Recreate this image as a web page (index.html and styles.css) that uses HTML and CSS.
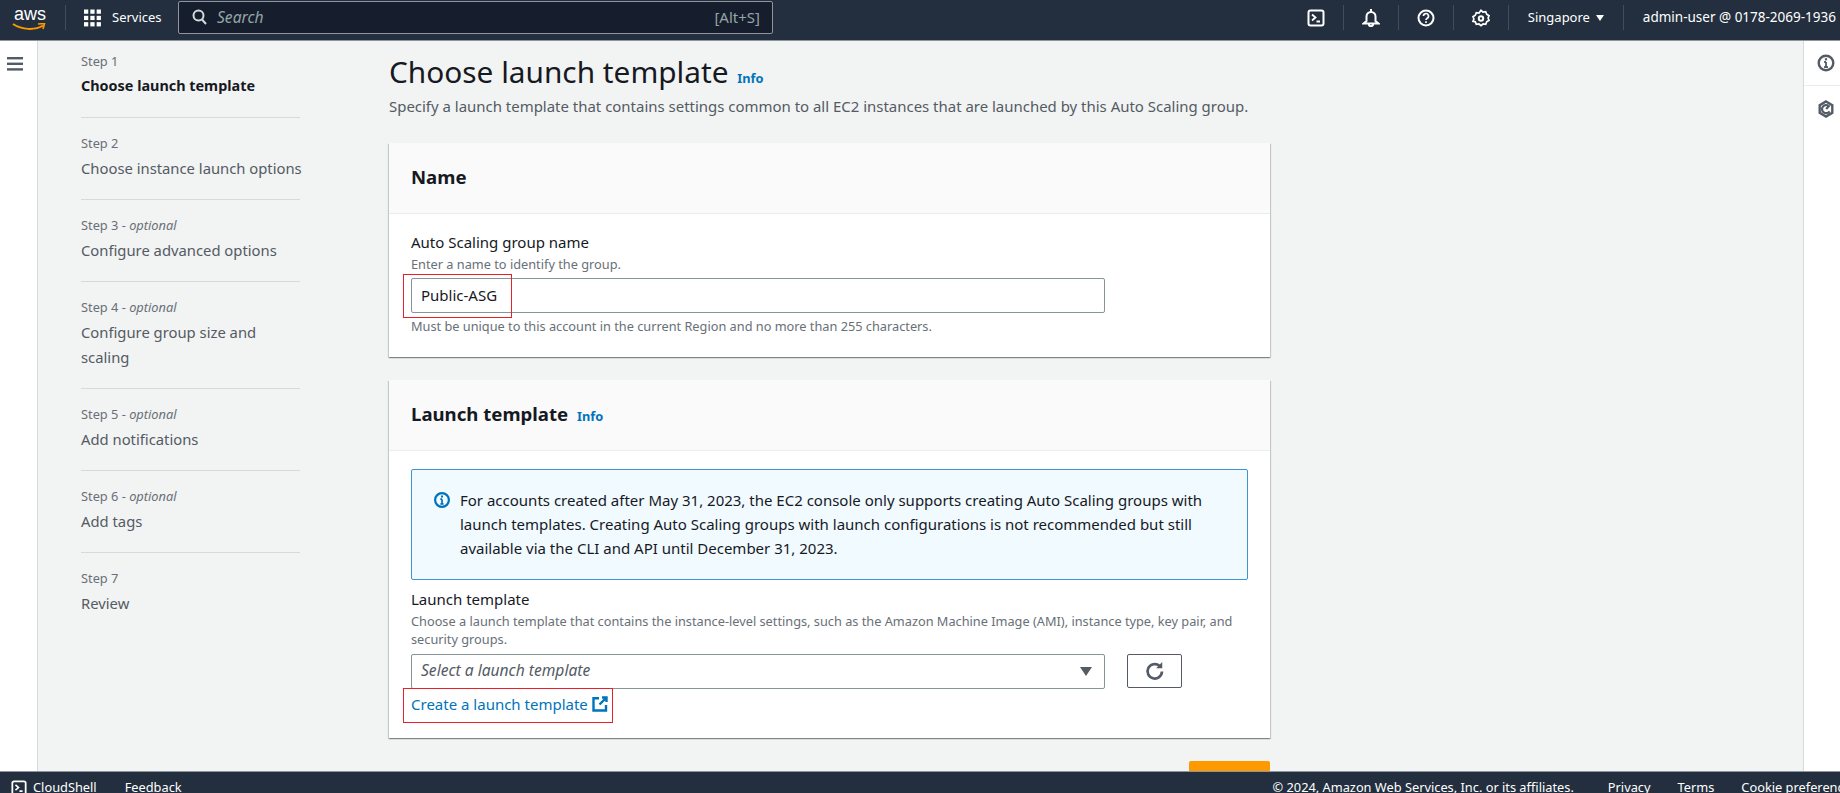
FILE: index.html

```html
<!DOCTYPE html>
<html lang="en">
<head>
  <meta charset="UTF-8" />
  <title>Create Auto Scaling group</title>
  <link rel="stylesheet" href="styles.css">
</head>
<body>
  <header class="topbar">
    <div class="logo">
      <span class="logo-text">aws</span>
      <svg class="logo-smile" width="35" height="8" viewBox="0 0 35 8"><path d="M1 1c9 6 22 6.500 30 1.500" fill="none" stroke="#f90" stroke-width="2"/><path d="M26 1l6.500-.5-1.500 5.500" fill="none" stroke="#f90" stroke-width="1.600"/></svg>
    </div>
    <div class="top-sep"></div>
    <svg class="grid-icon" width="17" height="18" viewBox="0 0 18 18" fill="#fff">
      <rect x="0" y="0" width="4.500" height="4.500"/><rect x="6.700" y="0" width="4.500" height="4.500"/><rect x="13.400" y="0" width="4.500" height="4.500"/>
      <rect x="0" y="6.700" width="4.500" height="4.500"/><rect x="6.700" y="6.700" width="4.500" height="4.500"/><rect x="13.400" y="6.700" width="4.500" height="4.500"/>
      <rect x="0" y="13.400" width="4.500" height="4.500"/><rect x="6.700" y="13.400" width="4.500" height="4.500"/><rect x="13.400" y="13.400" width="4.500" height="4.500"/>
    </svg>
    <span class="services">Services</span>
    <div class="search">
      <svg width="17" height="16" viewBox="0 0 16 16" fill="none" stroke="#d5dbdb" stroke-width="2"><circle cx="7" cy="6.500" r="5"/><path d="M10.500 10.500l4 4.500"/></svg>
      <span class="search-text">Search</span>
      <span class="search-key">[Alt+S]</span>
    </div>
    <div class="top-right">
      <div class="top-icon">
        <svg width="18" height="18" viewBox="0 0 18 18" fill="none" stroke="#fff" stroke-width="2"><rect x="1.500" y="1.500" width="15" height="15" rx="2"/><path d="M5 5.500l3.500 3-3.500 3M9.500 12.500h3.500" stroke-width="1.800"/></svg>
      </div>
      <div class="top-icon">
        <svg width="18" height="18" viewBox="0 0 18 18" fill="none" stroke="#fff" stroke-width="2"><path d="M9 0v2.500M4.500 12V7.500a4.500 4.500 0 0 1 9 0V12l3 2.500h-15zM6.800 15a2.200 2.200 0 0 0 4.400 0"/></svg>
      </div>
      <div class="top-icon">
        <svg width="18" height="18" viewBox="0 0 18 18" fill="none" stroke="#fff" stroke-width="2"><circle cx="9" cy="9" r="7.500"/><path d="M6.500 7a2.500 2.500 0 1 1 3.700 2.200c-.8.500-1.200 1-1.200 1.800" stroke-width="1.700"/><path d="M9 12.300v1.700" stroke-width="1.700"/></svg>
      </div>
      <div class="top-icon">
        <svg width="18" height="18" viewBox="0 0 18 18" fill="none" stroke="#fff" stroke-width="2"><path d="M9 1.300l2 1.700 2.700-.3 1 2.500 2.300 1.500-.9 2.300.9 2.300-2.300 1.500-1 2.500-2.700-.3-2 1.700-2-1.700-2.700.3-1-2.500L1 12.300l.9-2.300L1 7.700l2.300-1.500 1-2.500L7 4z" stroke-width="1.700"/><circle cx="9" cy="9.500" r="2.200"/></svg>
      </div>
      <div class="top-item top-region">Singapore <span class="caret"></span></div>
      <div class="top-item top-user">admin-user @ 0178-2069-1936</div>
    </div>
  </header>

  <div class="middle">
    <div class="left-rail">
      <svg width="16" height="14" viewBox="0 0 16 14" fill="#545b64"><rect width="16" height="2.400"/><rect y="5.600" width="16" height="2.400"/><rect y="11.200" width="16" height="2.400"/></svg>
    </div>

    <nav class="steps">
      <div class="step"><div class="step-num">Step 1</div><div class="step-name step-active">Choose launch template</div></div>
      <div class="step"><div class="step-num">Step 2</div><div class="step-name">Choose instance launch options</div></div>
      <div class="step"><div class="step-num">Step 3 - <i>optional</i></div><div class="step-name">Configure advanced options</div></div>
      <div class="step"><div class="step-num">Step 4 - <i>optional</i></div><div class="step-name">Configure group size and<br>scaling</div></div>
      <div class="step"><div class="step-num">Step 5 - <i>optional</i></div><div class="step-name">Add notifications</div></div>
      <div class="step"><div class="step-num">Step 6 - <i>optional</i></div><div class="step-name">Add tags</div></div>
      <div class="step step-last"><div class="step-num">Step 7</div><div class="step-name">Review</div></div>
    </nav>

    <main class="content">
      <h1>Choose launch template <a class="info" href="#">Info</a></h1>
      <p class="page-desc">Specify a launch template that contains settings common to all EC2 instances that are launched by this Auto Scaling group.</p>

      <section class="card">
        <div class="card-head"><h2>Name</h2></div>
        <div class="card-body">
          <div class="label">Auto Scaling group name</div>
          <div class="hint">Enter a name to identify the group.</div>
          <div class="field-wrap">
            <div class="field">Public-ASG</div>
            <div class="mark mark-name"></div>
          </div>
          <div class="hint hint-after">Must be unique to this account in the current Region and no more than 255 characters.</div>
        </div>
      </section>

      <section class="card">
        <div class="card-head"><h2>Launch template <a class="info" href="#">Info</a></h2></div>
        <div class="card-body">
          <div class="alert">
            <svg class="alert-icon" width="16" height="16" viewBox="0 0 16 16" fill="none" stroke="#0073bb" stroke-width="2.200"><circle cx="8" cy="8" r="6.900"/><path d="M8 7.200v4.600M6.300 12h3.400M6.300 7.200H8" stroke-width="1.700"/><path d="M8 3.600v2" stroke-width="2"/></svg>
            <p>For accounts created after May 31, 2023, the EC2 console only supports creating Auto Scaling groups with launch templates. Creating Auto Scaling groups with launch configurations is not recommended but still available via the CLI and API until December 31, 2023.</p>
          </div>
          <div class="label">Launch template</div>
          <div class="hint hint-wide">Choose a launch template that contains the instance-level settings, such as the Amazon Machine Image (AMI), instance type, key pair, and security groups.</div>
          <div class="select-row">
            <div class="field select"><i>Select a launch template</i><span class="select-caret"></span></div>
            <div class="refresh">
              <svg width="20" height="20" viewBox="0 0 18 18" fill="none" stroke="#545b64" stroke-width="2.400"><path d="M15.300 9.500a6.500 6.500 0 1 1-2.300-5.200"/><path d="M15.500 1v5.500H10z" fill="#545b64" stroke="none"/></svg>
            </div>
          </div>
          <div class="link-wrap">
            <a class="create-link" href="#">Create a launch template
              <svg width="16" height="16" viewBox="0 0 16 16" fill="none" stroke="#0073bb" stroke-width="2.400"><path d="M7 2.200H1.500v12.300H14V9M10 1.500h4.500V6M14 2L7.500 8.500"/></svg>
            </a>
            <div class="mark mark-link"></div>
          </div>
        </div>
      </section>

      <div class="actions"><div class="next-btn"></div></div>
    </main>

    <aside class="right-rail">
      <div class="rail-btn">
        <svg width="18" height="18" viewBox="0 0 18 18" fill="none" stroke="#545b64" stroke-width="2.400"><circle cx="9" cy="9" r="7.300"/><path d="M9 8v5M7.100 13h3.800M7.100 8H9" stroke-width="1.800"/><path d="M9 4.200v2.200" stroke-width="2.200"/></svg>
      </div>
      <div class="rail-btn">
        <svg width="18" height="18" viewBox="0 0 18 18" fill="none" stroke="#545b64" stroke-width="2.400"><path d="M9 1.500l6.300 3.700v7.600L9 16.500l-6.300-3.700V5.200z"/><path d="M12.600 11.300A4.100 4.100 0 1 1 11.800 6l-2.600 3" stroke-width="2.200"/></svg>
      </div>
    </aside>
  </div>

  <footer class="footer">
    <div class="foot-left">
      <svg width="16" height="16" viewBox="0 0 18 18" fill="none" stroke="#fff" stroke-width="2"><rect x="1.500" y="1.500" width="15" height="15" rx="2"/><path d="M5 5.500l3.500 3-3.500 3M9.500 12.500h3.500" stroke-width="1.800"/></svg>
      <span>CloudShell</span>
      <span class="foot-feedback">Feedback</span>
    </div>
    <div class="foot-right">
      <span class="foot-copy">© 2024, Amazon Web Services, Inc. or its affiliates.</span>
      <span>Privacy</span>
      <span>Terms</span>
      <span>Cookie preferences</span>
    </div>
  </footer>
</body>
</html>
```

FILE: styles.css

```css
* {
  box-sizing: border-box;
}
html, body {
  margin: 0;
  height: 793px;
  overflow: hidden;
}
body {
  display: flex;
  flex-direction: column;
  font-family: "Noto Sans", Arial, sans-serif;
  font-size: 15px;
  color: #16191f;
  background: #f2f3f3;
}
a {
  color: #0073bb;
  text-decoration: none;
}

/* top bar */
.topbar {
  flex: 0 0 41px;
  display: flex;
  align-items: center;
  background: #232f3e;
  color: #fff;
  padding: 0 4px 5px 12px;
  border-bottom: 1px solid #8d959e;
}
.logo {
  flex: none;
  width: 36px;
  height: 28px;
  position: relative;
}
.logo-text {
  font-family: "Liberation Sans", Arial, sans-serif;
  font-size: 18px;
  line-height: 20px;
  display: block;
  margin-left: 2px;
}
.logo-smile {
  position: absolute;
  left: 0;
  top: 19px;
}
.top-sep {
  width: 1px;
  height: 25px;
  background: #414d5c;
  margin: 0 18px 0 17px;
}
.grid-icon {
  flex: none;
}
.services {
  font-size: 13px;
  margin-left: 11px;
  width: 49px;
  white-space: nowrap;
  padding-bottom: 2px;
}
.search {
  width: 595px;
  height: 33px;
  margin-left: 17px;
  background: #161e2d;
  border: 1px solid #8d959e;
  border-radius: 2px;
  display: flex;
  align-items: center;
  padding: 0 12px 2px 12px;
}
.search-text {
  font-style: italic;
  font-size: 15.600px;
  color: #95a5a6;
  margin-left: 9px;
}
.search-key {
  margin-left: auto;
  color: #95a5a6;
}
.top-right {
  margin-left: auto;
  display: flex;
  align-items: center;
  height: 25px;
}
.top-icon {
  width: 55px;
  height: 25px;
  display: flex;
  align-items: center;
  justify-content: center;
  border-right: 1px solid #414d5c;
}
.top-item {
  font-size: 13.500px;
  white-space: nowrap;
  line-height: 25px;
}
.top-region {
  width: 115px;
  padding-left: 19px;
  border-right: 1px solid #414d5c;
  display: flex;
  align-items: center;
  font-size: 13px;
}
.top-user {
  padding-left: 19px;
}
.caret {
  margin-left: 6px;
  width: 0;
  height: 0;
  border-left: 4px solid transparent;
  border-right: 4px solid transparent;
  border-top: 6px solid #fff;
}

/* main row */
.middle {
  flex: 1;
  min-height: 0;
  display: flex;
  overflow: hidden;
}
.left-rail {
  flex: 0 0 38px;
  background: #fff;
  border-right: 1px solid #d5dbdb;
  padding: 14px 0 0 7px;
}
.steps {
  flex: 0 0 219px;
  min-width: 0;
  margin-left: 43px;
  padding-top: 10px;
}
.step {
  padding-bottom: 18px;
  margin-bottom: 15px;
  border-bottom: 1px solid #d5dbdb;
}
.step-last {
  border-bottom: 0;
}
.step-num {
  font-size: 12.800px;
  line-height: 20px;
  color: #687078;
}
.step-name {
  font-size: 14.800px;
  line-height: 25px;
  margin-top: 3px;
  color: #545b64;
  white-space: nowrap;
}
.step-active {
  font-size: 14.400px;
  font-weight: 700;
  color: #16191f;
  margin: 2px 0 1px;
}

.content {
  width: 881px;
  margin-left: 89px;
  padding-top: 16px;
}
h1 {
  margin: 0;
  font-size: 29.800px;
  font-weight: 400;
  line-height: 30px;
}
.info {
  font-size: 12.800px;
  font-weight: 700;
  margin-left: 4px;
}
h1 .info {
  margin-left: 1px;
}
.page-desc {
  margin: 2px 0 26px;
  font-size: 14.960px;
  line-height: 22px;
  color: #545b64;
}
.card {
  background: #fff;
  box-shadow: 0 1px 1px 0 rgba(0,28,36,0.3), 1px 1px 1px 0 rgba(0,28,36,0.15), -1px 1px 1px 0 rgba(0,28,36,0.15);
  margin-bottom: 23px;
}
.card-head {
  height: 71px;
  background: #fafafa;
  border-bottom: 1px solid #eaeded;
  padding: 0 22px 4px;
  display: flex;
  align-items: center;
}
h2 {
  margin: 0;
  font-size: 18.600px;
  font-weight: 700;
}
.card-body {
  padding: 18px 22px 22px;
}
.label {
  line-height: 20px;
}
.hint {
  font-size: 12.750px;
  line-height: 18px;
  margin-top: 3px;
  color: #687078;
}
.hint-after {
  margin-top: 4px;
}
.field-wrap {
  position: relative;
  width: 694px;
  margin-top: 5px;
}
.field {
  width: 694px;
  height: 35px;
  border: 1px solid #879596;
  border-radius: 2px;
  padding: 0 9px;
  line-height: 33px;
  background: #fff;
}
.mark {
  position: absolute;
  border: 1px solid #e8202a;
}
.mark-name {
  left: -8px;
  top: -4px;
  width: 109px;
  height: 44px;
}
.alert {
  display: flex;
  align-items: flex-start;
  gap: 10px;
  height: 111px;
  padding: 18px 30px 0 22px;
  background: #f1faff;
  border: 1px solid #3f93cf;
  border-radius: 2px;
  margin-bottom: 9px;
}
.alert-icon {
  flex: none;
  margin-top: 4px;
}
.alert p {
  margin: 0;
  line-height: 24px;
}
.select-row {
  display: flex;
  gap: 22px;
  margin-top: 6px;
}
.select {
  display: flex;
  align-items: center;
  color: #545b64;
  padding-right: 12px;
  padding-bottom: 2px;
}
.select i {
  font-size: 15.600px;
}
.select-caret {
  margin-left: auto;
  margin-top: 2px;
  width: 0;
  height: 0;
  border-left: 6px solid transparent;
  border-right: 6px solid transparent;
  border-top: 9px solid #545b64;
}
.refresh {
  width: 55px;
  height: 34px;
  border: 1px solid #545b64;
  border-radius: 2px;
  display: flex;
  align-items: center;
  justify-content: center;
}
.link-wrap {
  position: relative;
  margin-top: 3px;
  height: 24px;
}
.create-link {
  line-height: 24px;
  display: inline-flex;
  align-items: center;
  gap: 4px;
}
.mark-link {
  left: -8px;
  top: -4px;
  width: 210px;
  height: 35px;
}
.actions {
  display: flex;
  justify-content: flex-end;
}
.next-btn {
  width: 81px;
  height: 34px;
  background: #ff9900;
  border-radius: 2px;
}

.right-rail {
  flex: 0 0 37px;
  margin-left: auto;
  background: #fff;
  border-left: 1px solid #d5dbdb;
}
.rail-btn {
  height: 45px;
  display: flex;
  align-items: center;
  justify-content: center;
  padding-left: 8px;
  border-bottom: 1px solid #eaeded;
}
.rail-btn:last-child {
  border-bottom: 0;
}

/* footer */
.footer {
  flex: 0 0 22px;
  display: flex;
  justify-content: space-between;
  background: #232f3e;
  color: #fff;
  font-size: 12.800px;
  line-height: 31px;
  border-top: 1px solid #8d959e;
  padding-left: 11px;
  overflow: hidden;
  white-space: nowrap;
}
.foot-left {
  display: flex;
  align-items: flex-start;
  gap: 6px;
}
.foot-left svg {
  margin-top: 8px;
}
.foot-feedback {
  margin-left: 22px;
}
.foot-right {
  flex: none;
  display: flex;
  gap: 27px;
  margin-right: -17px;
}
.foot-copy {
  margin-right: 7px;
}
```
